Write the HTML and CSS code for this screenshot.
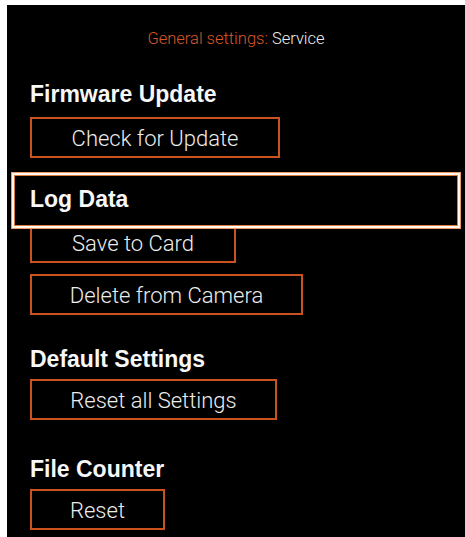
FILE: index.html
```html
<!DOCTYPE html>
<html>
<head>
<meta charset="utf-8">
<link rel="stylesheet" href="styles.css">
</head>
<body>
<div class="screen">
  <div class="header"><span class="crumb">General settings:</span> Service</div>

  <div class="title t-firmware">Firmware Update</div>
  <div class="btn b-check">Check for Update</div>

  <div class="title selected">Log Data</div>
  <div class="btn b-save">Save to Card</div>
  <div class="btn b-delete">Delete from Camera</div>

  <div class="title t-default">Default Settings</div>
  <div class="btn b-resetall">Reset all Settings</div>

  <div class="title t-counter">File Counter</div>
  <div class="btn b-reset">Reset</div>
</div>
</body>
</html>
```

FILE: styles.css
```css
html, body {
  margin: 0;
  padding: 0;
  background: #ffffff;
}
body {
  font-family: "Liberation Sans", Arial, sans-serif;
  overflow: hidden;
}
.screen {
  margin: 5px 0 0 7px;
  width: 458px;
  height: 532px;
  background: #000;
  overflow: hidden;
  display: flex;
  flex-direction: column;
  align-items: flex-start;
}
.header {
  align-self: stretch;
  text-align: center;
  font-family: Roboto, "Liberation Sans", sans-serif;
  font-weight: 300;
  font-size: 16.5px;
  line-height: 20px;
  padding-top: 24px;
  color: #ededed;
}
.crumb {
  color: #d8582a;
}
.title {
  font-size: 23px;
  font-weight: bold;
  line-height: 26px;
  color: #f7f7f7;
  padding-left: 23px;
}
.t-firmware { margin-top: 32px; }
.t-default { margin-top: 31px; }
.t-counter { margin-top: 36px; }

.selected {
  position: relative;
  z-index: 1;
  box-sizing: border-box;
  width: 448px;
  height: 55px;
  margin: 15px 0 0 5px;
  padding: 11px 0 0 16px;
  background: #000;
  border: 2px solid #fff6ee;
  box-shadow: 0 0 0 1px #e99a64, inset 0 0 0 1px #d97a40;
}

.btn {
  box-sizing: border-box;
  height: 41px;
  margin-left: 23px;
  border: 2px solid #c9521f;
  padding-top: 2px;
  line-height: 35px;
  font-family: Roboto, "Liberation Sans", sans-serif;
  font-weight: 300;
  font-size: 22px;
  color: #ececec;
  text-align: center;
  white-space: nowrap;
}
.b-check { width: 250px; margin-top: 10px; }
.b-save { width: 206px; margin-top: -6px; }
.b-delete { width: 273px; margin-top: 11px; }
.b-resetall { width: 247px; margin-top: 7px; }
.b-reset { width: 135px; margin-top: 7px; }
```
